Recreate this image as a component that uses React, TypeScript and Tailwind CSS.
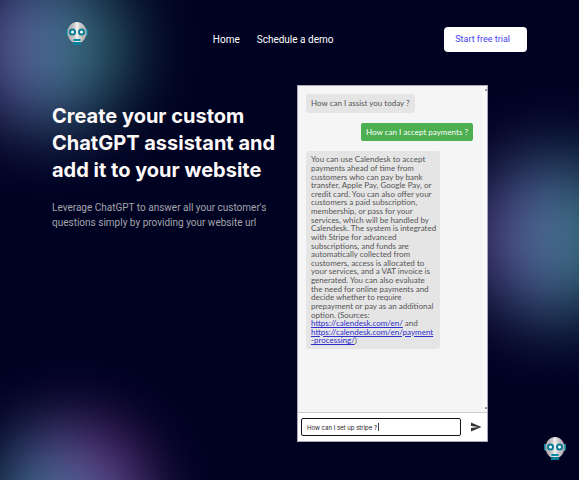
import { useState } from "react";

function Robot({ className }: { className: string }) {
  return (
    <svg viewBox="0 0 22 23" className={className} aria-hidden="true">
      <defs>
        <linearGradient id="face" x1="0" x2="1" y1="0" y2="0">
          <stop offset="0" stopColor="#a9a9ad" />
          <stop offset="0.35" stopColor="#c9c7c8" />
          <stop offset="0.5" stopColor="#f5f3f2" />
          <stop offset="0.65" stopColor="#cfcccc" />
          <stop offset="1" stopColor="#aaa8ab" />
        </linearGradient>
      </defs>
      <path d="M0 7h2v6H0zM20 7h2v6h-2z" fill="#0b7f98" />
      <path d="M1 7h1v7H1zM20 7h1v7h-1z" fill="#1593ab" />
      <path d="M11 0C16 0 20.500 4.500 20.500 10.500C20.500 15 18 18.500 15 20.500h-8C4 18.500 1.500 15 1.500 10.500C1.500 4.500 6 0 11 0Z" fill="url(#face)" />
      <circle cx="6.500" cy="10" r="3.500" fill="#0a7d95" />
      <circle cx="15.500" cy="10" r="3.500" fill="#0a7d95" />
      <circle cx="6.500" cy="10" r="1.500" fill="#fff" />
      <circle cx="15.500" cy="10" r="1.500" fill="#fff" />
      <path d="M7.500 17h7v2h-7z" fill="#0b8ba3" />
      <path d="M9 19h4v1H9z" fill="#efeff0" />
      <path d="M7 20h8v3H7z" fill="#0b7f98" />
    </svg>
  );
}

function Backdrop() {
  return (
    <div className="pointer-events-none absolute inset-0 overflow-hidden" aria-hidden="true">
      <div className="absolute -top-8 -left-8 size-[160px] rounded-full bg-linear-to-r from-[#6c4298] via-[#45709a] via-50% to-[#2a7060] blur-[36px]" />
      <div className="absolute top-[158px] -right-14 size-[160px] rounded-full bg-linear-to-r from-[#6c4298] via-[#45709a] via-45% to-[#2a7060] blur-[36px]" />
      <div className="absolute -bottom-[96px] -left-1 size-[155px] rounded-full bg-linear-to-tr from-[#2a7060] from-10% via-[#44709c] via-45% to-[#652a80] to-80% blur-[32px]" />
    </div>
  );
}

function Chat() {
  const [message, setMessage] = useState("How can I set up stripe ?");
  return (
    <section
      aria-label="Chat"
      className="flex h-[357px] w-[191px] shrink-0 flex-col border border-[#a9a6b8] bg-[#f5f5f5] font-[Lato,'Open_Sans',sans-serif] text-[8px] leading-[1.08] text-[#555]"
    >
      <div className="relative flex flex-1 flex-col items-start gap-[10px] py-2 pr-[14px] pl-2">
        <p className="rounded-[3px] bg-[#e5e5e5] px-[5px] py-[5px]">How can I assist you today ?</p>
        <p className="self-end rounded-[2px] bg-[#4caf50] px-[5px] py-[5px] text-white">How can I accept payments ?</p>
        <p className="w-[134px] rounded-[3px] bg-[#e5e5e5] px-[5px] py-1 whitespace-nowrap">
          You can use Calendesk to accept<br />
          payments ahead of time from<br />
          customers who can pay by bank<br />
          transfer, Apple Pay, Google Pay, or<br />
          credit card. You can also offer your<br />
          customers a paid subscription,<br />
          membership, or pass for your<br />
          services, which will be handled by<br />
          Calendesk. The system is integrated<br />
          with Stripe for advanced<br />
          subscriptions, and funds are<br />
          automatically collected from<br />
          customers, access is allocated to<br />
          your services, and a VAT invoice is<br />
          generated. You can also evaluate<br />
          the need for online payments and<br />
          decide whether to require<br />
          prepayment or pay as an additional<br />
          option. (Sources:<br />
          <a href="https://calendesk.com/en/" className="text-[#2f2fd0] underline">https://calendesk.com/en/</a> and<br />
          <a href="https://calendesk.com/en/payment-processing/" className="text-[#2f2fd0] underline">
            https://calendesk.com/en/payment<br />-processing/
          </a>
          )
        </p>
        <div className="absolute inset-y-0 right-0 flex w-1 flex-col justify-between bg-[#f9f9f9] py-[3px]">
          <span className="ml-auto size-[2px] bg-[#999]" />
          <span className="ml-auto size-[2px] bg-[#999]" />
        </div>
      </div>
      <form
        className="flex items-center border-t border-[#ccc] bg-white py-[5px] pr-[5px] pl-[3px]"
        onSubmit={(event) => event.preventDefault()}
      >
        <div className="relative flex flex-1">
          <input
            aria-label="Message"
            value={message}
            onChange={(event) => setMessage(event.target.value)}
            className="h-[18px] w-full min-w-0 rounded-[2px] border border-[#17131f] bg-white px-[5px] font-[Inter,sans-serif] text-[6px] text-[#222] outline-none"
          />
          <span className="absolute top-[5px] left-[77px] h-2 w-px bg-[#444]" aria-hidden="true" />
        </div>
        <button type="submit" aria-label="Send" className="ml-[9px] text-[#333]">
          <svg viewBox="0 0 24 24" className="size-[12px]" fill="currentColor">
            <path d="M2 21 23 12 2 3v7l15 2-15 2z" />
          </svg>
        </button>
      </form>
    </section>
  );
}

export default function App() {
  return (
    <div className="relative min-h-screen overflow-hidden bg-[#000222] px-[52px] font-[Roboto,sans-serif] text-white">
      <Backdrop />
      <header className="relative flex items-center justify-between pt-[22px] text-[10px]">
        <a href="#home" aria-label="Home page" className="pb-3 pl-[14px]">
          <Robot className="h-[23px] w-[22px]" />
        </a>
        <nav className="flex gap-[17px] pl-[14px]">
          <a href="#home">Home</a>
          <a href="#demo">Schedule a demo</a>
        </nav>
        <button type="button" className="h-[25px] rounded-[4px] bg-white pr-[17px] pl-[11px] text-[9px] text-[#4845f5]">
          Start free trial
        </button>
      </header>
      <main className="relative flex pt-7">
        <div className="w-[245px] shrink-0 pt-[18px]">
          <h1 className="font-[Inter,sans-serif] text-[20px] leading-[27px] font-bold text-[#fffafa]">
            Create your custom<br />ChatGPT assistant and<br />add it to your website
          </h1>
          <p className="mt-4 text-[10px] leading-[15px] text-[#a5a5ab]">
            Leverage ChatGPT to answer all your customer's<br />questions simply by providing your website url
          </p>
        </div>
        <Chat />
      </main>
      <button type="button" aria-label="Open chat" className="fixed right-[13px] bottom-[20px]">
        <Robot className="h-[23px] w-[22px]" />
      </button>
    </div>
  );
}
